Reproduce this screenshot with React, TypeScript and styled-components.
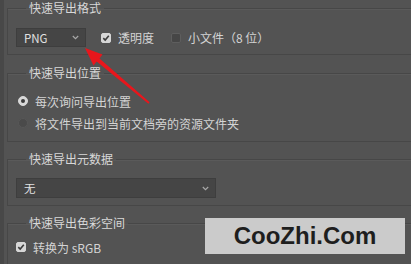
import styled, { createGlobalStyle } from "styled-components";

const GlobalStyle = createGlobalStyle`
  body {
    margin: 0;
    background: #535353;
  }
`;

const Page = styled.div`
  position: relative;
  width: 411px;
  height: 264px;
  overflow: hidden;
  background: #535353;
  border-left: 4px solid #484848;
  box-sizing: border-box;
  padding-left: 3px;
  font-family: "Noto Sans CJK SC", "Noto Sans", sans-serif;
  font-size: 12px;
  color: #d4d4d4;
`;

const Group = styled.fieldset<{ $top: number }>`
  margin: ${(p) => p.$top}px -30px 0 0;
  padding: 0 0 7px 8px;
  border: 1px solid #474747;
  box-shadow: inset 0 1px 0 #5a5a5a;
  min-width: 0;
`;

const Legend = styled.legend`
  margin-left: 10px;
  padding: 0 3px;
  line-height: 16px;
  color: #d8d8d8;
`;

const Row = styled.div<{ $pt?: number; $h?: number }>`
  display: flex;
  align-items: center;
  height: ${(p) => p.$h ?? 22}px;
  padding-top: ${(p) => p.$pt ?? 0}px;
`;

const Select = styled.div<{ $w: number }>`
  width: ${(p) => p.$w}px;
  height: 19px;
  box-sizing: border-box;
  background: #454545;
  border: 1px solid #3e3e3e;
  display: flex;
  align-items: center;
  justify-content: space-between;
  padding: 0 6px 0 7px;
  color: #e2e2e2;
  font-size: 11.5px;
`;

const Box = styled.span<{ $on?: boolean }>`
  width: 10px;
  height: 10px;
  box-sizing: border-box;
  border-radius: 2px;
  background: ${(p) => (p.$on ? "#d6d6d6" : "#464646")};
  border: 1px solid ${(p) => (p.$on ? "#d6d6d6" : "#5e5e5e")};
  display: inline-flex;
  align-items: center;
  justify-content: center;
  flex: none;
`;

const Radio = styled.span<{ $on?: boolean }>`
  width: 10px;
  height: 10px;
  box-sizing: border-box;
  border-radius: 50%;
  background: ${(p) => (p.$on ? "#d8d8d8" : "#4a4a4a")};
  border: 1px solid ${(p) => (p.$on ? "#d8d8d8" : "#575757")};
  display: inline-flex;
  align-items: center;
  justify-content: center;
  flex: none;
  &::after {
    content: "";
    display: ${(p) => (p.$on ? "block" : "none")};
    width: 4px;
    height: 4px;
    border-radius: 50%;
    background: #3a3a3a;
  }
`;

const Label = styled.span<{ $ml?: number }>`
  margin-left: ${(p) => p.$ml ?? 7}px;
  white-space: nowrap;
`;

const Watermark = styled.div`
  position: absolute;
  left: 201px;
  top: 218px;
  width: 200px;
  height: 36px;
  background: #cbcbcb;
  color: #1e1e1e;
  font-family: "Liberation Sans", Arial, sans-serif;
  font-weight: bold;
  font-size: 24px;
  display: flex;
  align-items: center;
  justify-content: center;
`;

const Arrow = styled.svg`
  position: absolute;
  left: 0;
  top: 0;
  pointer-events: none;
`;

const Chevron = () => (
  <svg width="7" height="5" viewBox="0 0 7 5">
    <path d="M0.8 1 L3.5 3.6 L6.2 1" fill="none" stroke="#a8a8a8" strokeWidth="1.2" />
  </svg>
);

const Check = () => (
  <svg width="8" height="8" viewBox="0 0 8 8">
    <path d="M1.3 4.2 L3.2 6 L6.8 1.8" fill="none" stroke="#3a3a3a" strokeWidth="1.6" />
  </svg>
);

export default function App() {
  return (
    <>
      <GlobalStyle />
      <Page>
        <Group $top={0}>
          <Legend>快速导出格式</Legend>
          <Row $pt={12} $h={19}>
            <Select $w={70}>
              PNG
              <Chevron />
            </Select>
            <Box $on style={{ marginLeft: 15 }}>
              <Check />
            </Box>
            <Label>透明度</Label>
            <Box style={{ marginLeft: 17 }} />
            <Label>小文件（8 位）</Label>
          </Row>
        </Group>

        <Group $top={10}>
          <Legend>快速导出位置</Legend>
          <Row $pt={9}>
            <Radio $on style={{ marginLeft: 2 }} />
            <Label>每次询问导出位置</Label>
          </Row>
          <Row>
            <Radio style={{ marginLeft: 2 }} />
            <Label>将文件导出到当前文档旁的资源文件夹</Label>
          </Row>
        </Group>

        <Group $top={9}>
          <Legend>快速导出元数据</Legend>
          <Row $pt={11} $h={20}>
            <Select $w={200} style={{ height: 20 }}>
              无
              <Chevron />
            </Select>
          </Row>
        </Group>

        <Group $top={9}>
          <Legend>快速导出色彩空间</Legend>
          <Row $pt={5}>
            <Box $on>
              <Check />
            </Box>
            <Label>转换为 sRGB</Label>
          </Row>
        </Group>

        <Arrow width="411" height="264" viewBox="0 0 411 264">
          <polygon
            points="81,48 98.5,54.5 95.5,58.5 145.6,102.2 144.4,103.8 92.7,61.5 89.5,65.5"
            fill="#e8161c"
          />
        </Arrow>
        <Watermark>CooZhi.Com</Watermark>
      </Page>
    </>
  );
}
